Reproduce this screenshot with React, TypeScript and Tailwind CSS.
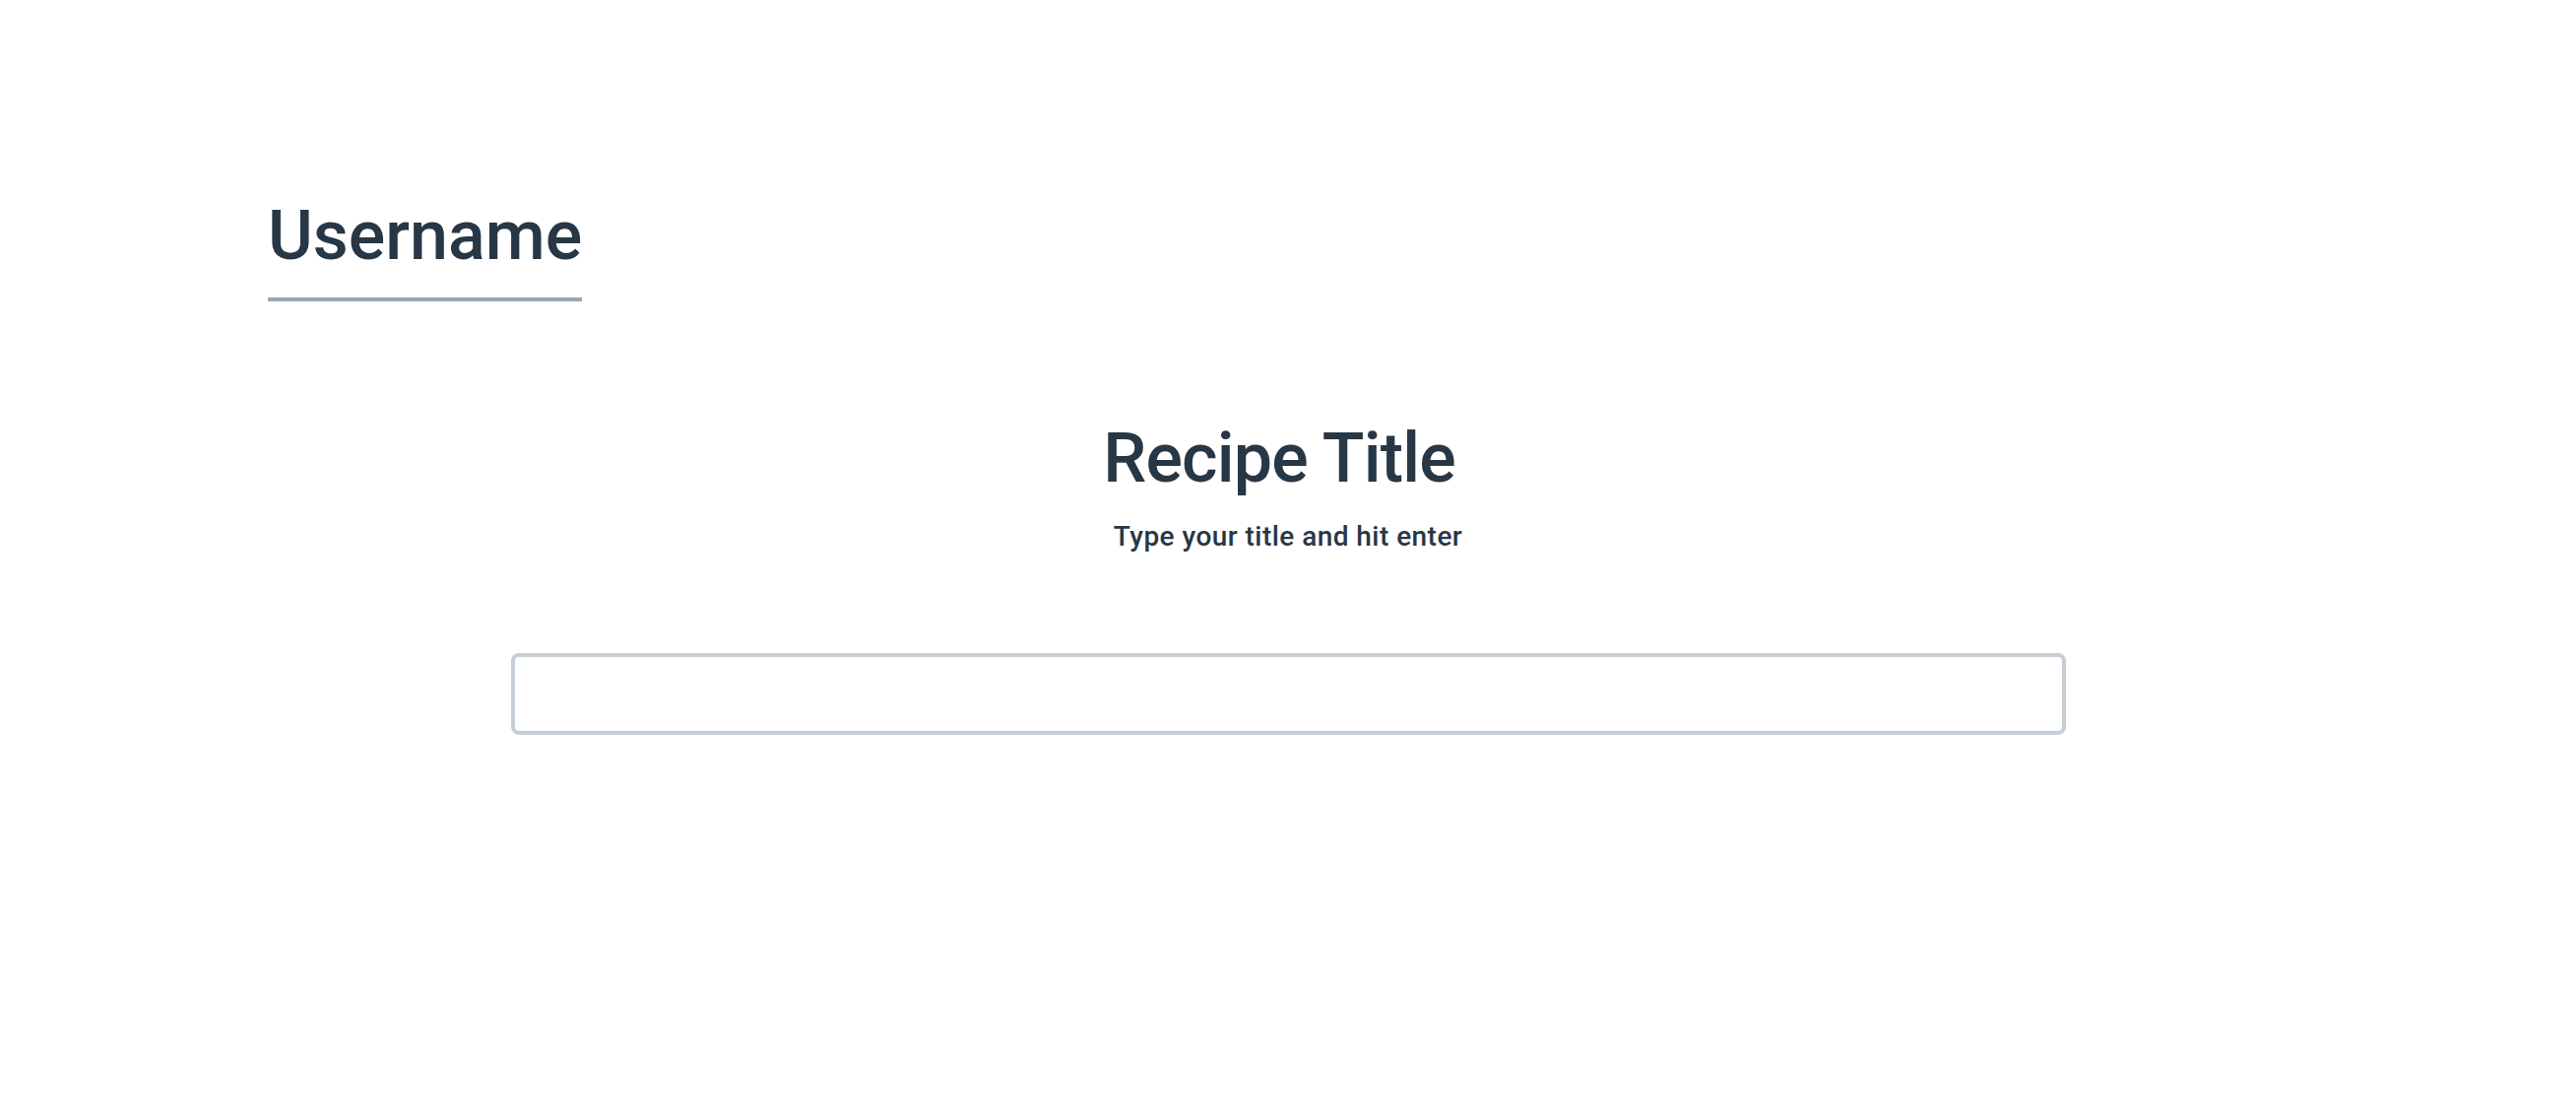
import React, { useState } from 'react';

export default function App() {
  const [title, setTitle] = useState('');

  return (
    <div className="min-h-screen w-full bg-white text-[#273746] font-['Roboto','Liberation_Sans',sans-serif]">
      <div className="pl-[272px] pt-[204px]">
        <h2 className="inline-block border-b-4 border-[#9aa8b5] pb-[28px] text-[70px] leading-none font-medium">
          Username
        </h2>
      </div>

      <div className="mt-[124px] flex flex-col items-center">
        <h1 className="mr-[18px] text-[70px] leading-none font-medium tracking-[-0.012em]">Recipe Title</h1>
        <p className="mt-[31px] text-[28px] leading-none font-medium tracking-[0.45px]">Type your title and hit enter</p>
      </div>

      <form
        className="mt-[104px] flex justify-center"
        onSubmit={(e) => {
          e.preventDefault();
        }}
      >
        <input
          type="text"
          value={title}
          onChange={(e) => setTitle(e.target.value)}
          className="w-[1579px] h-[83px] rounded-lg border-4 border-[#c5ced8] bg-white px-5 text-[27px] outline-none"
        />
      </form>
    </div>
  );
}
